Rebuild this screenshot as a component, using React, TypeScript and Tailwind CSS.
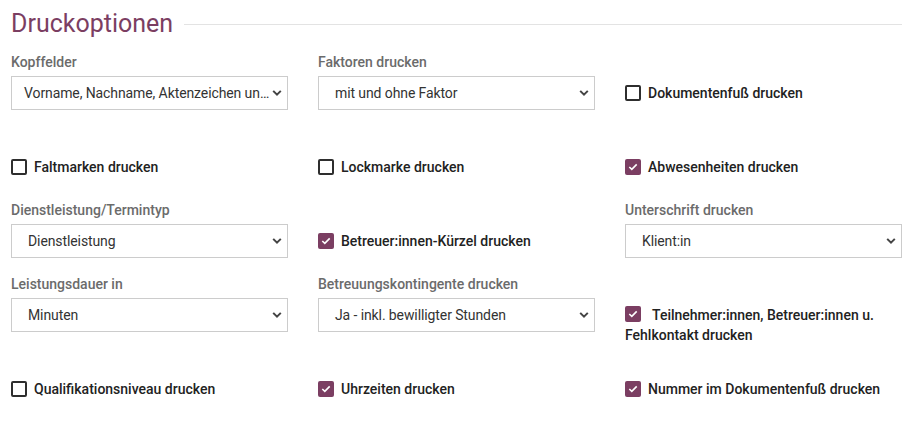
import React from 'react';

const PURPLE = 'bg-[#7b3e62]';

const Chevron = () => (
  <svg
    className="absolute right-[5px] top-1/2 -translate-y-1/2 pointer-events-none"
    width="10"
    height="7"
    viewBox="0 0 10 7"
    fill="none"
  >
    <path d="M1.2 1.4 5 5.2 8.8 1.4" stroke="#444" strokeWidth="2" />
  </svg>
);

const SelectField: React.FC<{ label: string; value: string; pl?: string }> = ({ label, value, pl = 'pl-[16px]' }) => (
  <div className="flex flex-col">
    <div className="h-[24px] text-[14px] leading-[20px] font-medium text-[#6b6b6b]">{label}</div>
    <div className="relative h-[34px] border border-[#cccccc] bg-white flex items-center overflow-hidden">
      <span className={`${pl} pr-[15px] truncate text-[14px] tracking-[-0.1px] text-[#333333]`}>{value}</span>
      <Chevron />
    </div>
  </div>
);

const Box: React.FC<{ checked?: boolean; extra?: string }> = ({ checked, extra = '' }) =>
  checked ? (
    <span className={`inline-flex w-[16px] h-[16px] rounded-[2px] ${PURPLE} items-center justify-center shrink-0 ${extra}`}>
      <svg width="10" height="8" viewBox="0 0 10 8" fill="none">
        <path d="M1.3 4 3.8 6.3 8.7 1.4" stroke="#fff" strokeWidth="1.6" />
      </svg>
    </span>
  ) : (
    <span className={`inline-block w-[16px] h-[16px] rounded-[2px] border-2 border-[#2e2e2e] shrink-0 ${extra}`} />
  );

const Check: React.FC<{ label: string; checked?: boolean; top?: boolean }> = ({ label, checked, top }) => (
  <label className={`flex items-center gap-[7px] h-[20px] text-[14px] leading-[20px] font-medium text-[#222222] ${top ? 'mt-[31px]' : ''}`}>
    <Box checked={checked} />
    <span>{label}</span>
  </label>
);

export default function App() {
  return (
    <div className="w-[918px] h-[426px] bg-white px-[11px] font-['Roboto',sans-serif]">
      <div className="flex items-center gap-[11px] pt-[10px] w-[891px]">
        <h2 className="text-[25px] leading-[28px] text-[#7b3e62] font-normal">Druckoptionen</h2>
        <div className="flex-1 h-px bg-[#e3e3e3]" />
      </div>

      <div className="grid grid-cols-[277px_277px_277px] gap-x-[30px] mt-[14px]">
        <SelectField label="Kopffelder" value="Vorname, Nachname, Aktenzeichen und Geburtsdatum" pl="pl-[12px]" />
        <SelectField label="Faktoren drucken" value="mit und ohne Faktor" />
        <Check label="Dokumentenfuß drucken" top />
      </div>

      <div className="grid grid-cols-[277px_277px_277px] gap-x-[30px] mt-[47px]">
        <Check label="Faltmarken drucken" />
        <Check label="Lockmarke drucken" />
        <Check label="Abwesenheiten drucken" checked />
      </div>

      <div className="grid grid-cols-[277px_277px_277px] gap-x-[30px] mt-[23px]">
        <SelectField label="Dienstleistung/Termintyp" value="Dienstleistung" />
        <Check label="Betreuer:innen-Kürzel drucken" checked top />
        <SelectField label="Unterschrift drucken" value="Klient:in" />
      </div>

      <div className="grid grid-cols-[277px_277px_277px] gap-x-[30px] mt-[16px] items-start">
        <SelectField label="Leistungsdauer in" value="Minuten" />
        <SelectField label="Betreuungskontingente drucken" value="Ja - inkl. bewilligter Stunden" />
        <label className="mt-[31px] block text-[14px] leading-[20px] font-medium text-[#222222]">
          <Box checked extra="align-top relative top-[1px]" />
          <span className="ml-[11px]">Teilnehmer:innen, Betreuer:innen u. Fehlkontakt drucken</span>
        </label>
      </div>

      <div className="grid grid-cols-[277px_277px_277px] gap-x-[30px] mt-[34px]">
        <Check label="Qualifikationsniveau drucken" />
        <Check label="Uhrzeiten drucken" checked />
        <Check label="Nummer im Dokumentenfuß drucken" checked />
      </div>
    </div>
  );
}
